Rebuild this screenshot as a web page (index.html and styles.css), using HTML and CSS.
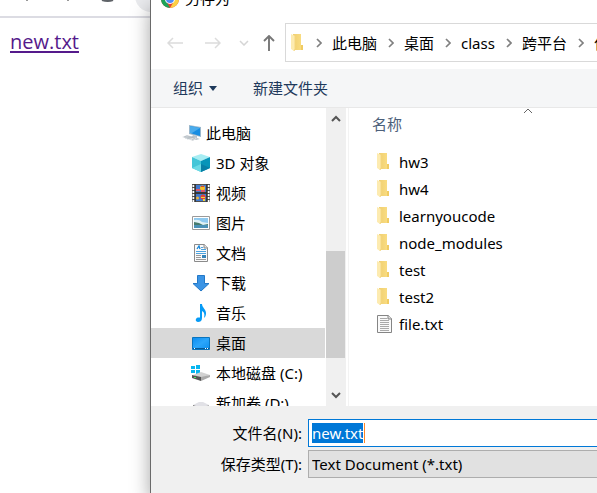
FILE: index.html
```html
<!DOCTYPE html>
<html lang="zh-CN">
<head>
<meta charset="utf-8">
<title>另存为</title>
<link rel="stylesheet" href="styles.css">
</head>
<body>
<svg width="0" height="0" class="defs" aria-hidden="true">
  <defs>
    <linearGradient id="gold" x1="0" x2="1"><stop offset="0" stop-color="#f0cf70"/><stop offset="1" stop-color="#fbdf85"/></linearGradient>
    <linearGradient id="blue" x1="0" x2="1" y2="1"><stop offset="0" stop-color="#0b8cf0"/><stop offset=".5" stop-color="#2ba6fb"/><stop offset="1" stop-color="#0c8eee"/></linearGradient>
    <symbol id="folder" viewBox="0 0 14 18"><path d="M2 0h8v11h2v5H2z" fill="url(#gold)"/><path d="M10 11h2v5h-2z" fill="#f0cb62"/><path d="M0 0l4 2v13l-1 2-3-2z" fill="#fdebb0"/><path d="M4 2v13l-1 2" fill="none" stroke="#f4d67f"/></symbol>
    <symbol id="chevron" viewBox="0 0 6 10"><path d="M1 1l4 4-4 4" fill="none" stroke="#808080" stroke-width="1.700"/></symbol>
  </defs>
</svg>
<div class="page">
  <div class="browser-bar">
    <svg width="150" height="16" viewBox="0 0 150 16" aria-hidden="true"><path d="M26 0h2v1h-2zM67 0h2v1h-2z" fill="#999"/><path d="M102 0q6 2 11 0" fill="none" stroke="#5f6368" stroke-width="2"/><circle cx="151" cy="-4" r="16" fill="#e9eaed"/></svg>
  </div>
  <main><a class="download" href="#">new.txt</a></main>
</div>
<section class="dialog">
  <header class="titlebar">
    <svg width="18" height="18" viewBox="0 0 18 18" aria-hidden="true"><circle cx="9" cy="9" r="9" fill="#e44335"/><path d="M1 5l4 6 4 7A9 9 0 0 1 1 5z" fill="#1ca35a"/><path d="M9 5h8a9 9 0 0 1-8 13l4-7z" fill="#fcd044"/><circle cx="9" cy="9" r="5" fill="#fff"/><circle cx="9" cy="9" r="4" fill="#4c8bf5"/></svg>
    <span>另存为</span>
  </header>
  <nav class="navbar">
    <div class="arrows">
      <button aria-label="后退"><svg width="16" height="12" viewBox="0 0 16 12"><path d="M16 6H1M6 1L1 6l5 5" fill="none" stroke="#dcdcdc" stroke-width="1.500"/></svg></button>
      <button aria-label="前进"><svg width="16" height="12" viewBox="0 0 16 12"><path d="M0 6h15M10 1l5 5-5 5" fill="none" stroke="#dcdcdc" stroke-width="1.500"/></svg></button>
      <button aria-label="最近" class="recent"><svg width="10" height="6" viewBox="0 0 10 6"><path d="M1 1l4 4 4-4" fill="none" stroke="#d5d5d5" stroke-width="1.500"/></svg></button>
      <button aria-label="向上" class="up"><svg width="12" height="16" viewBox="0 0 12 16"><path d="M6 16V1M1 6l5-5 5 5" fill="none" stroke="#777" stroke-width="1.900"/></svg></button>
    </div>
    <div class="address">
      <svg width="14" height="18"><use href="#folder"/></svg>
      <svg class="sep" width="6" height="10"><use href="#chevron"/></svg><span>此电脑</span>
      <svg class="sep" width="6" height="10"><use href="#chevron"/></svg><span>桌面</span>
      <svg class="sep" width="6" height="10"><use href="#chevron"/></svg><span>class</span>
      <svg class="sep" width="6" height="10"><use href="#chevron"/></svg><span>跨平台</span>
      <svg class="sep" width="6" height="10"><use href="#chevron"/></svg><span>作业</span>
    </div>
  </nav>
  <div class="toolbar">
    <button>组织<svg width="8" height="5" viewBox="0 0 8 5"><path d="M0 0h8L4 5z" fill="#1e395b"/></svg></button>
    <button>新建文件夹</button>
  </div>
  <div class="panes">
    <ul class="tree">
      <li class="root"><svg width="20" height="20" viewBox="0 0 20 20"><path d="M7 2l12 2v10L7 11z" fill="#9ab7cc"/><path d="M8 3l10 2v8L8 10z" fill="#168de2"/><path d="M8 3l10 2-8 5-2 0z" fill="#4aabec"/><path d="M11 12l4 1v2l3 1-4 1-5-2z" fill="#b7c3cc"/><path d="M0 14l5-2 10 3-4 3z" fill="#d9dde0"/><path d="M2 14l3-1 8 2-3 2M3 15l8-1M5 16l7-2" fill="none" stroke="#aeb8bf" stroke-width=".7"/></svg>此电脑</li>
      <li><svg width="20" height="20" viewBox="0 0 20 20"><path d="M1 4l9-3 9 3-9 4z" fill="#a7edf3"/><path d="M1 4l9 4v11l-9-4z" fill="#43c6d8"/><path d="M19 4l-9 4v11l9-4z" fill="#0795b9"/><path d="M1 15l9-4v8z" fill="#6bdae5"/><path d="M10 11l9 4-9 4z" fill="#087fa6"/></svg>3D 对象</li>
      <li><svg width="20" height="20" viewBox="0 0 20 20"><path d="M1 1h18v18H1z" fill="#505050"/><path d="M2.500 2v17M17.500 2v17" stroke="#fff" stroke-width="2" stroke-dasharray="2 1"/><path d="M5 2h10v7H5zM5 11h10v7H5z" fill="#4178cd"/><circle cx="11.500" cy="5" r="2.500" fill="#f4bd2b"/><path d="M5 6h4v2H5zM10 7h4v2h-4z" fill="#df5668"/><path d="M10 3h3v1h-3z" fill="#d44131"/><circle cx="12" cy="14" r="2.500" fill="#e34137"/><path d="M10 14h4v1h-4zM12 16h2v2h-2z" fill="#f5d535"/><circle cx="6.500" cy="15" r="1.500" fill="#edb331"/><path d="M4 1v18M16 1v18M4 10h12" stroke="#222" stroke-width="1"/></svg>视频</li>
      <li><svg width="20" height="20" viewBox="0 0 20 20"><path d="M1.500 3.500h17v13h-17z" fill="#fff" stroke="#9a9a9a"/><path d="M3 5h14v10H3z" fill="#8ec9ef"/><path d="M3 7q5-1 8 2l6 1v2H3z" fill="#e0f1f5"/><path d="M3 9l5 1 4 2 5-1v2H3z" fill="#477b6c"/><path d="M3 12h14v3H3z" fill="#4b91b6"/></svg>图片</li>
      <li><svg width="20" height="20" viewBox="0 0 20 20"><path d="M3.500 1.500h10l3 3v14h-13z" fill="#fafafa" stroke="#8b8b8b"/><path d="M13 1v4h4" fill="#ddd" stroke="#8b8b8b"/><path d="M6 6l2-3 1 3" fill="none" stroke="#1686d9" stroke-width="1.300"/><path d="M10 4.500h2M10 6.500h5M5 8.500h10M5 10.500h10" stroke="#4ca2df"/><path d="M5 12.500h5M5 14.500h5M5 16.500h10" stroke="#999"/><path d="M11 12h4v3h-4z" fill="#3684b8"/></svg>文档</li>
      <li><svg width="20" height="20" viewBox="0 0 20 20"><path d="M6.500 2.500h7v8h4.500l-8 7.500-8-7.500h4.500z" fill="#3b94e5" stroke="#2378c7"/></svg>下载</li>
      <li><svg width="20" height="20" viewBox="0 0 20 20"><path d="M9 1h2c0 4 4.500 5 4 10-.2 2-1 3-2 4 1-4 0-6-2-7v7c0 3-2 4-4 4-3 0-3-4 0-4.500h2z" fill="#069bf6"/></svg>音乐</li>
      <li class="selected"><svg width="20" height="20" viewBox="0 0 20 20"><path d="M1.500 4.500h17v12h-17z" fill="url(#blue)" stroke="#0974be"/><path d="M2 15.500h16" stroke="#075995"/><path d="M3 15.500h1M14 15.500h1M16 15.500h1" stroke="#fff"/></svg>桌面</li>
      <li><svg width="20" height="20" viewBox="0 0 20 20"><path d="M0 3h4v3H0zM5 2h4v4H5zM0 7h4v3H0zM5 7h4v4H5z" fill="#08b6f0"/><path d="M2 12l8-3 9 3-9 3z" fill="#d2d2d2"/><path d="M1 12l9 2v4l-9-3z" fill="#555"/><path d="M10 14l9-2v2l-9 4z" fill="#aaa"/><path d="M3 14h2v1H3z" fill="#43e95e"/></svg>本地磁盘 (C:)</li>
      <li><svg width="20" height="20" viewBox="0 0 20 20"><path d="M2 12l6-3h4l6 3-8 4z" fill="#e1e1e6"/><path d="M2 12l8 3v4l-8-3z" fill="#777"/><path d="M10 15l8-3v4l-8 3z" fill="#aaa"/></svg>新加卷 (D:)</li>
    </ul>
    <div class="scrollbar">
      <svg width="12" height="8" viewBox="0 0 12 8"><path d="M2 7l4-4 4 4" fill="none" stroke="#555" stroke-width="2"/></svg>
      <div class="track"><div class="thumb"></div></div>
      <svg width="12" height="8" viewBox="0 0 12 8"><path d="M2 1l4 4 4-4" fill="none" stroke="#555" stroke-width="2"/></svg>
    </div>
    <div class="files">
      <div class="column"><span>名称</span><svg width="10" height="6" viewBox="0 0 10 6"><path d="M1 5l4-4 4 4" fill="none" stroke="#666"/></svg></div>
      <ul>
        <li><svg width="16" height="18" viewBox="0 0 16 18"><use href="#folder" width="14" height="18"/></svg>hw3</li>
        <li><svg width="16" height="18" viewBox="0 0 16 18"><use href="#folder" width="14" height="18"/></svg>hw4</li>
        <li><svg width="16" height="18" viewBox="0 0 16 18"><use href="#folder" width="14" height="18"/></svg>learnyoucode</li>
        <li><svg width="16" height="18" viewBox="0 0 16 18"><use href="#folder" width="14" height="18"/></svg>node_modules</li>
        <li><svg width="16" height="18" viewBox="0 0 16 18"><use href="#folder" width="14" height="18"/></svg>test</li>
        <li><svg width="16" height="18" viewBox="0 0 16 18"><use href="#folder" width="14" height="18"/></svg>test2</li>
        <li><svg width="16" height="18" viewBox="0 0 16 18"><path d="M.5.5h11l3 3v14H.5z" fill="#fafafa" stroke="#858585"/><path d="M11 0v4h4" fill="#ddd" stroke="#858585"/><path d="M3 3.500h7M3 5.500h9M3 7.500h9M3 9.500h9M3 11.500h9M3 13.500h9M3 15.500h9" stroke="#aaa"/></svg>file.txt</li>
      </ul>
    </div>
  </div>
  <form class="fields">
    <label for="name">文件名(N):</label>
    <div class="name-box"><input id="name" type="text" value="new.txt" autofocus><i class="caret"></i></div>
    <label for="type">保存类型(T):</label>
    <select id="type"><option>Text Document (*.txt)</option></select>
  </form>
</section>
<script src="script.js"></script>
</body>
</html>
```
FILE: styles.css
```css
* { box-sizing: border-box; }
body {
  margin: 0;
  height: 100vh;
  display: flex;
  overflow: hidden;
  background: #fff;
  color: #000;
  font: 15px/20px "Noto Sans", "Noto Sans CJK SC", sans-serif;
}
ul { list-style: none; margin: 0; padding: 0; }
svg { flex: none; display: block; }
button, input, select { font: inherit; color: inherit; }
button { border: 0; padding: 0; background: none; display: flex; align-items: center; }
.defs { position: absolute; }
.page { flex: 0 0 150px; }
.browser-bar { border-bottom: 2px solid #dcdce3; }
main { padding: 10px; font-family: "Open Sans", sans-serif; font-size: 20px; line-height: 28px; }
.download { color: #551a8b; text-decoration-thickness: 2px; text-underline-offset: 2px; }
.dialog {
  flex: 1;
  min-width: 0;
  display: flex;
  flex-direction: column;
  background: #fff;
  border-left: 1px solid #6a6a6a;
  box-shadow: 0 8px 18px rgba(0, 0, 0, .36);
}
.titlebar {
  height: 8px;
  padding-left: 10px;
  display: flex;
  align-items: flex-end;
  gap: 6px;
  overflow: hidden;
}
.navbar { display: flex; padding: 15px 0 7px; }
.arrows { flex: 0 0 134px; display: flex; align-items: center; padding-left: 16px; gap: 22px; }
.arrows .recent { margin-left: -4px; }
.arrows .up { margin-left: -8px; }
.address {
  flex: 1;
  min-width: 0;
  height: 39px;
  display: flex;
  align-items: center;
  border: 1px solid #d9d9d9;
  border-right: 0;
  padding-left: 5px;
  white-space: nowrap;
  overflow: hidden;
}
.address span { flex: none; }
.sep { margin: 0 10px 0 11px; }
.toolbar {
  height: 39px;
  display: flex;
  align-items: center;
  gap: 36px;
  padding-left: 22px;
  background: #f5f6f7;
  border-bottom: 1px solid #e8e8e8;
  color: #1e395b;
}
.toolbar button { gap: 6px; }
.panes { flex: 1; min-height: 0; display: flex; overflow: hidden; }
.tree { flex: 0 0 175px; padding-top: 10px; }
.tree li { height: 30px; display: flex; align-items: center; gap: 5px; padding-left: 40px; margin-right: 1px; white-space: nowrap; }
.tree .root { padding-left: 31px; gap: 4px; }
.tree .selected { background: #d9d9d9; }
.scrollbar {
  flex: 0 0 20px;
  display: flex;
  flex-direction: column;
  align-items: center;
  gap: 7px;
  padding: 6px 0;
  background: #f0f0f0;
}
.track { flex: 1; width: 100%; padding-top: 122px; }
.thumb { height: 107px; margin-right: 1px; background: #cdcdcd; }
.files { flex: 1; margin-left: 2px; padding-left: 23px; border-left: 1px solid #f3f3f3; }
.column { display: flex; height: 40px; align-items: flex-start; gap: 121px; color: #4c607a; }
.column span { padding-top: 6px; }
.files li { height: 27px; display: flex; align-items: center; gap: 6px; padding-left: 5px; }
.fields {
  display: grid;
  grid-template-columns: 151px 1fr;
  grid-auto-rows: 28px;
  align-items: center;
  gap: 3px 6px;
  padding: 13px 0 15px;
  background: #f0f0f0;
}
.fields label { text-align: right; }
.name-box { position: relative; height: 28px; }
.name-box input, .fields select {
  display: block;
  width: 100%;
  height: 28px;
  margin: 0;
  padding: 0 3px;
  border: 1px solid #0078d7;
  border-right: 0;
  border-radius: 0;
  outline: 0;
  background: #fff;
}
.name-box input::selection { background: #0078d7; color: #fff; }
.caret { position: absolute; left: 56px; top: 4px; width: 1px; height: 20px; background: #ff8728; }
.fields select { appearance: none; border-color: #adadad; background: #e1e1e1; }
```
FILE: script.js
```js
const nameInput = document.getElementById("name");
nameInput.focus();
nameInput.select();
```
